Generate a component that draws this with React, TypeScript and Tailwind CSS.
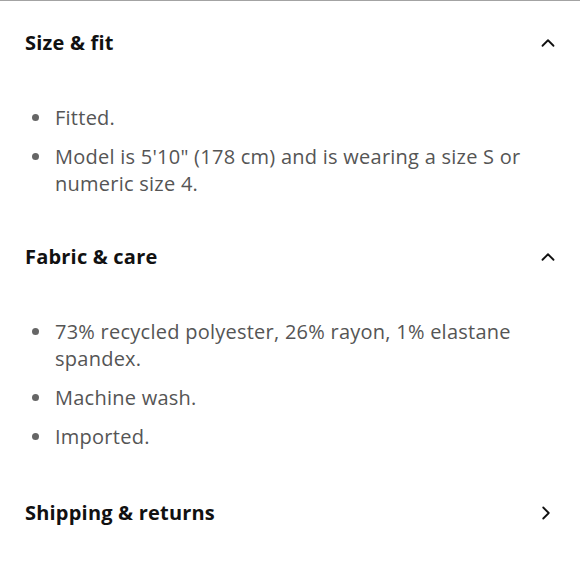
import { ChevronUp, ChevronRight } from 'lucide-react';

type Section = {
  title: string;
  open: boolean;
  items: string[];
};

const sections: Section[] = [
  {
    title: 'Size & fit',
    open: true,
    items: ['Fitted.', 'Model is 5\'10" (178 cm) and is wearing a size S or numeric size 4.'],
  },
  {
    title: 'Fabric & care',
    open: true,
    items: ['73% recycled polyester, 26% rayon, 1% elastane spandex.', 'Machine wash.', 'Imported.'],
  },
  {
    title: 'Shipping & returns',
    open: false,
    items: [],
  },
];

export default function App() {
  return (
    <div className="min-h-[580px] w-[580px] border-t border-[#a3a3a3] bg-white font-['Open_Sans','Liberation_Sans',sans-serif] [font-variant-ligatures:none]">
      <div className="flex flex-col px-[25px] pt-[28px]">
        {sections.map((s, i) => (
          <section key={s.title} className={i === 0 ? '' : i === 2 ? 'mt-[49px]' : 'mt-[46px]'}>
            <div className="flex h-[28px] items-center justify-between">
              <h2 className="text-[20px] font-bold leading-[28px] tracking-[0.2px] text-[#111]">{s.title}</h2>
              {s.open ? (
                <ChevronUp size={22} strokeWidth={2} className="mr-[-4px] text-[#111]" />
              ) : (
                <ChevronRight size={22} strokeWidth={2} className="mr-[-2px] text-[#111]" />
              )}
            </div>
            {s.items.length > 0 && (
              <ul className="mt-[47px] flex flex-col gap-[12px] pr-[20px]">
                {s.items.map((item) => (
                  <li key={item} className="flex text-[20px] leading-[27px] tracking-[0.25px] text-[#555]">
                    <span className="flex h-[27px] w-[30px] shrink-0 items-center pl-[7px]">
                      <span className="h-[7px] w-[7px] rounded-full bg-[#666]" />
                    </span>
                    <span>{item}</span>
                  </li>
                ))}
              </ul>
            )}
          </section>
        ))}
      </div>
    </div>
  );
}
